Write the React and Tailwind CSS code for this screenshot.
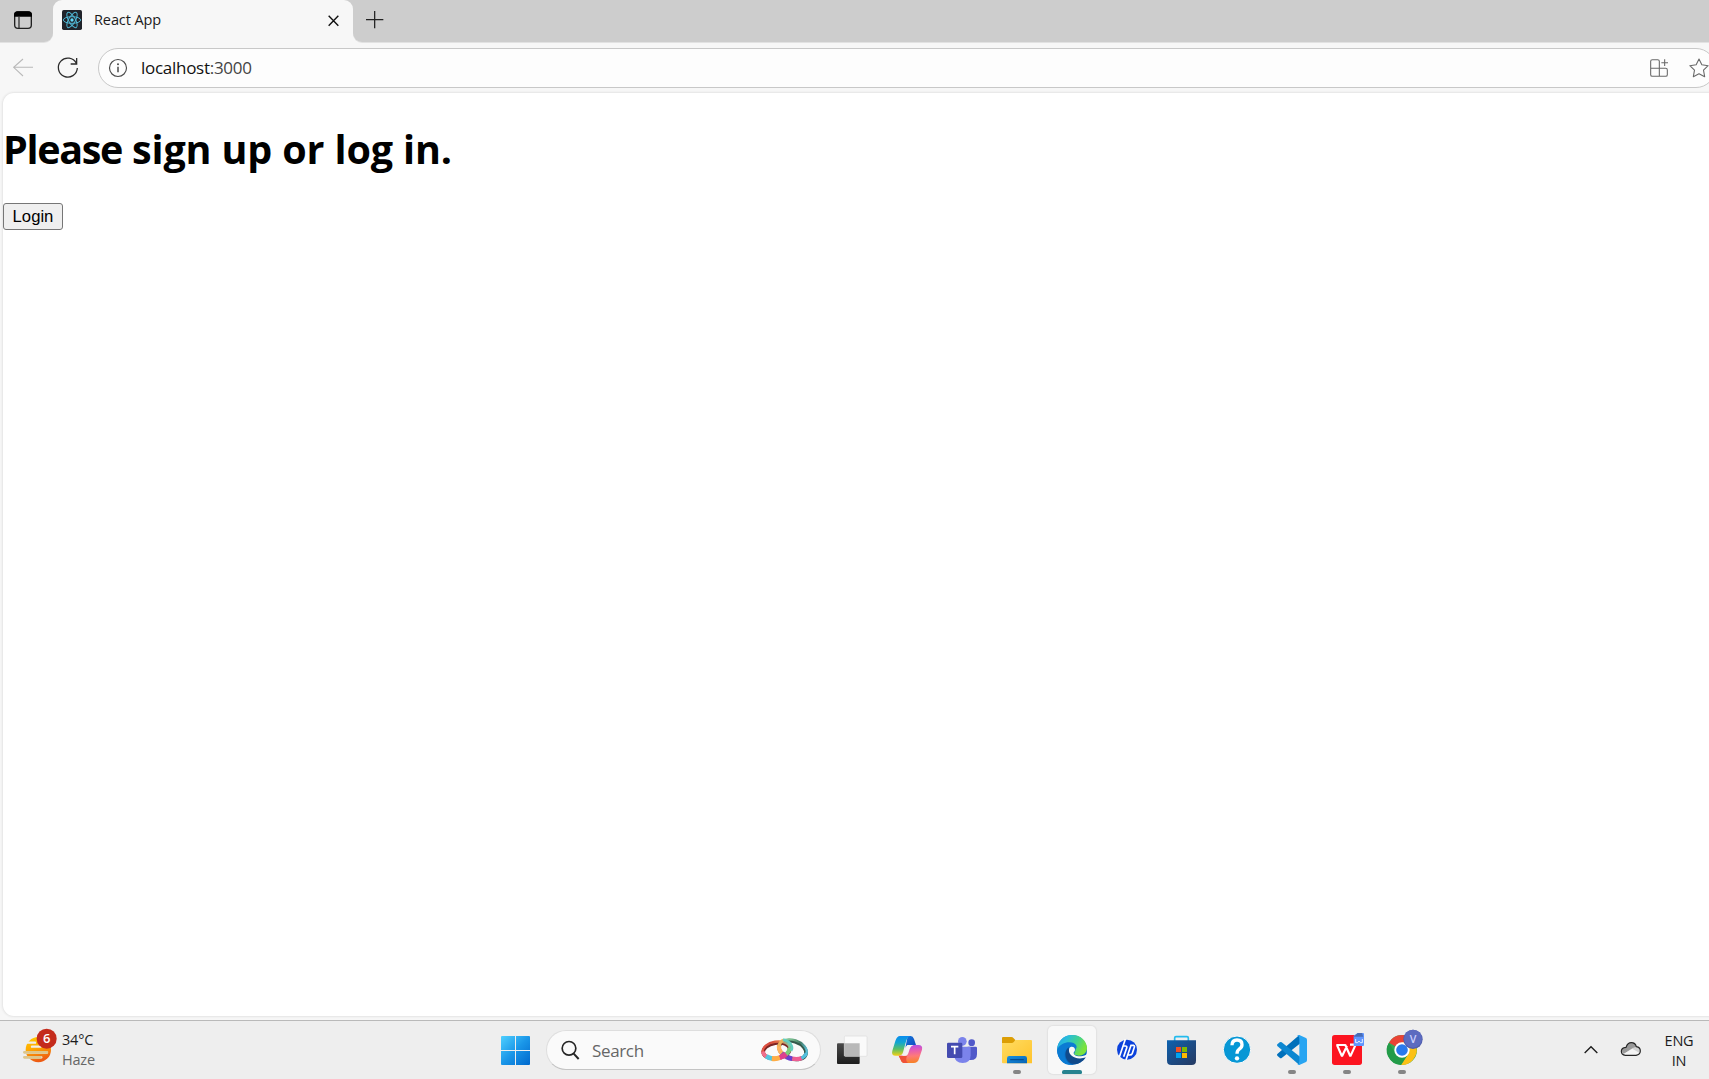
import React from "react";

const UI = "font-['Open_Sans','Noto_Sans',sans-serif]";

function TabBar() {
  return (
    <div className="flex h-[42px] shrink-0 bg-[#f7f7f7]">
      <div className="flex w-[53px] rounded-br-[9px] bg-[#cdcdcd] shadow-[0_1px_0_#e2e2e2]">
        <svg className="ml-3 mt-2 size-6" viewBox="36 24 72 72" fill="none">
          <rect x="44" y="36" width="50" height="49" rx="10" stroke="#202020" strokeWidth="4" />
          <path d="M42 50v-5q0-11 11-11h32q11 0 11 11v5z" fill="#000" />
          <path d="M57 50v34" stroke="#202020" strokeWidth="3.5" />
        </svg>
      </div>
      <div className="h-5 w-[300px] bg-[#cdcdcd]">
        <div className="flex h-[42px] items-start rounded-t-[9px] bg-[#f7f7f7] pl-[9px]">
          <svg className="mt-[10px] size-5" viewBox="0 0 60 60" fill="none">
            <rect width="60" height="60" rx="5" fill="#20232a" />
            <g stroke="#4fb5d2" strokeWidth="3">
              <ellipse cx="30" cy="30" rx="26" ry="10" />
              <ellipse cx="30" cy="30" rx="26" ry="10" transform="rotate(60 30 30)" />
              <ellipse cx="30" cy="30" rx="26" ry="10" transform="rotate(120 30 30)" />
            </g>
            <circle cx="30" cy="30" r="5" fill="#61dafb" />
          </svg>
          <span className="ml-3 mt-[9px] w-[80px] whitespace-nowrap text-[14.5px] leading-[22px] tracking-[-0.1px] text-[#1b1b1b]">React App</span>
          <svg className="ml-[150px] mt-[12px] size-[18px]" viewBox="0 0 54 54" fill="none">
            <path d="M14 11l29 30M43 11L14 41" stroke="#111" strokeWidth="4.2" />
          </svg>
        </div>
      </div>
      <div className="flex-1 rounded-bl-[9px] bg-[#cdcdcd] pl-[9px] pt-[8px] shadow-[0_1px_0_#e2e2e2]">
        <svg className="size-6" viewBox="0 0 72 72" fill="none">
          <path d="M38 9v52M12 35h52" stroke="#222" strokeWidth="3.8" />
        </svg>
      </div>
    </div>
  );
}

function AddressRow() {
  return (
    <div className="flex h-[50px] shrink-0">
      <svg className="h-[50px] w-[98px] shrink-0" viewBox="0 126 294 150" fill="none">
        <path d="M99 202H42M69 177L41 202l28 26" stroke="#b9b9b9" strokeWidth="3.2" />
        <path d="M229 190A28.5 28.5 0 1 0 232 204M230 174v18h-18" stroke="#2b2b2b" strokeWidth="3.8" />
      </svg>
      <div className="mt-[6px] flex h-10 w-[1618px] shrink-0 items-center rounded-full border border-[#c8c8c8] bg-[#fdfdfd]">
        <svg className="ml-[9px] size-5 shrink-0" viewBox="0 0 60 60" fill="none">
          <circle cx="30" cy="30" r="25.5" stroke="#4a4a4a" strokeWidth="3.4" />
          <path d="M30 26v17" stroke="#4a4a4a" strokeWidth="4.5" />
          <circle cx="30" cy="18.5" r="3" fill="#4a4a4a" />
        </svg>
        <span className="ml-[13px] w-[130px] shrink-0 text-[17px] tracking-[-0.28px] text-[#444]">
          <span className="text-[#111]">localhost</span>
          <span>:3000</span>
        </span>
        <svg className="ml-[1379px] h-[38px] w-[60px] shrink-0" viewBox="123 147 180 114" fill="none" stroke="#686868" strokeWidth="3.2">
          <path d="M151 205V184q0-5-5-5H130q-5 0-5 5v40q0 5 5 5h40q5 0 5-5v-14q0-5-5-5H125M151 205v24M167 178v20M157 188h20" />
          <path strokeLinejoin="round" d="M270 177l8.5 17 19 3-14 13.500 3.500 19.500-17-9-17 9 3.500-19.500-14-13.500 19-3z" />
        </svg>
      </div>
    </div>
  );
}

function TaskIcon({ vb, running, children }) {
  return (
    <svg className="size-12 shrink-0" viewBox={vb}>
      {children}
      {running && <rect x={running} y="180" width="24" height="12" rx="6" fill="#858585" />}
    </svg>
  );
}

function Gradient({ id, stops, x2 = 1, y2 = 1 }) {
  return (
    <linearGradient id={id} x1="0" y1="0" x2={x2} y2={y2}>
      {stops.map((c, i) => (
        <stop key={i} offset={i / (stops.length - 1)} stopColor={c} />
      ))}
    </linearGradient>
  );
}

function Gradients() {
  return (
    <svg className="absolute size-0">
      <defs>
        <Gradient id="win" stops={["#4fd0ff", "#1a96e8", "#0068cc"]} />
        <Gradient id="sun" stops={["#ffce00", "#ffa800", "#ed5b13"]} x2={0.3} />
        <Gradient id="dark" stops={["#4a4a4a", "#1d1d1d"]} x2={0} />
        <Gradient id="copA" stops={["#0a8cf0", "#12a6cf", "#5bbf63", "#f3cf16"]} x2={0} />
        <Gradient id="copB" stops={["#a950f0", "#e35bb5", "#ff7a78", "#f7812c"]} x2={0.1} />
        <Gradient id="copC" stops={["#1278dc", "#1248bd"]} />
        <Gradient id="folder" stops={["#ffdc62", "#ffc32b"]} />
        <Gradient id="fblue" stops={["#1890e0", "#0763b4"]} />
        <Gradient id="edgeA" stops={["#249fe1", "#29bddb", "#41d290", "#7be33b"]} x2={1} y2={0.4} />
        <Gradient id="edgeB" stops={["#22a9e8", "#0b7ad2", "#0761b7"]} x2={0.3} />
        <Gradient id="store" stops={["#0c62b0", "#1c4c86", "#263a62"]} />
        <Gradient id="ringA" stops={["#e55543", "#d4493c", "#e77748", "#85c9a1"]} y2={0} />
        <Gradient id="ringB" stops={["#8fd39d", "#7cc092", "#447965", "#5bc3dc"]} y2={0} />
      </defs>
    </svg>
  );
}

function Rings() {
  return (
    <svg className="ml-[108px] h-[30px] w-[50px] shrink-0" viewBox="840 78 150 90" fill="none">
      <g transform="rotate(18 938 122)">
        <ellipse cx="938" cy="123" rx="42" ry="26" stroke="#33594b" strokeWidth="11" />
        <ellipse cx="938" cy="121" rx="43" ry="28" stroke="url(#ringB)" strokeWidth="7" />
        <path d="M895 121q2 15 15 21" stroke="#ffb35e" strokeWidth="13" />
        <path d="M910 142q10 6 20 7" stroke="#a6509c" strokeWidth="14" />
        <path d="M928 148q9 2 18 0" stroke="#693fd0" strokeWidth="14" />
        <path d="M945 148q17-2 27-11" stroke="#ee5e92" strokeWidth="13" />
        <path d="M971 138q9-9 9-19" stroke="#52bfdf" strokeWidth="9" />
      </g>
      <g transform="rotate(-9 889 124)">
        <ellipse cx="889" cy="125" rx="40" ry="23" stroke="#7c2523" strokeWidth="11" />
        <ellipse cx="889" cy="123" rx="41" ry="25" stroke="url(#ringA)" strokeWidth="7" />
        <path d="M848 121q1 12 12 19" stroke="#ee6f8c" strokeWidth="11" />
        <path d="M856 137q8 7 18 10" stroke="#53c6df" strokeWidth="14" />
        <path d="M872 146q13 4 25 1" stroke="#ffad45" strokeWidth="15" />
        <path d="M896 147q13-2 22-8" stroke="#df3f8e" strokeWidth="15" />
        <path d="M917 140q11-7 13-18" stroke="#7bcd79" strokeWidth="12" />
      </g>
      <path d="M896 112q3-13 14-19" stroke="#e8b45c" strokeWidth="9" />
      <path d="M909 92q18 4 24 15 6 10 0 18" stroke="#63cfc0" strokeWidth="8" />
    </svg>
  );
}

function SearchBox() {
  return (
    <div className="ml-4 flex h-10 w-[275px] shrink-0 items-center rounded-full border border-[#dedede] border-b-[#c4c4c4] bg-[#fafafa]">
      <svg className="ml-[13px] mt-px size-[22px] shrink-0" viewBox="240 90 66 66" fill="none">
        <circle cx="267" cy="115" r="20.500" stroke="#252525" strokeWidth="5" />
        <path d="M281 131l15 16" stroke="#252525" strokeWidth="6" />
      </svg>
      <span className="ml-[10px] mt-[2px] w-[60px] shrink-0 text-[17px] leading-6 tracking-[-0.35px] text-[#666]">Search</span>
      <Rings />
    </div>
  );
}

function Taskbar() {
  return (
    <div className="flex h-[59px] shrink-0 border-t border-[#b9b9b9] bg-[#eeeeee]">
      <div className="flex w-[501px] shrink-0">
        <svg className="ml-[20px] mt-[6px] h-9 w-[40px]" viewBox="60 78 120 108">
          <circle cx="115" cy="146" r="38" fill="url(#sun)" />
          <path d="M84 125h21M96 137h25M74 155h66M74 169h50" stroke="#eeeeee" strokeWidth="7" strokeLinecap="round" />
          <path d="M73 154h68M73 169h48" stroke="#ddc58b" strokeWidth="8" strokeLinecap="round" />
          <circle cx="140" cy="113" r="30" fill="#c42b1c" />
          <text x="140" y="127" textAnchor="middle" fontSize="39" fontFamily="Open Sans" fontWeight="600" fill="#fff">6</text>
        </svg>
        <div className="ml-[2px] mt-[9px] text-[14.5px] leading-5 tracking-[-0.2px]">
          <div className="text-[#1c1c1c]">34°C</div>
          <div className="text-[#666]">Haze</div>
        </div>
      </div>
      <svg className="mt-[15px] size-[29px] shrink-0" viewBox="0 0 87 87">
        <path fill="url(#win)" d="M3 0h39v42H0V3q0-3 3-3zM45 0h39q3 0 3 3v39H45zM0 45h42v42H3q-3 0-3-3zM45 45h42v39q0 3-3 3H45z" />
      </svg>
      <div className="mt-[9px] flex">
        <SearchBox />
      </div>
      <div className="ml-[7px] mt-[5px] flex gap-[7px]">
        <TaskIcon vb="9 48 144 144">
          <rect x="36" y="100" width="68" height="62" rx="3" fill="url(#dark)" />
          <rect x="58" y="78" width="68" height="61" rx="3" fill="#fafafa" stroke="#dcdcdc" strokeWidth="2" />
          <path d="M58 100h46v38H61q-3 0-3-3z" fill="#b8b8b8" />
        </TaskIcon>
        <TaskIcon vb="174 48 144 144">
          <path d="M248 78h9q7 0 10 9l6 18h-20q-10 0-12 9z" fill="url(#copC)" />
          <path d="M225 78h31q-9 3-12 13l-10 36q-3 10-12 10h-10q-14 0-10-15l9-29q5-15 14-15z" fill="url(#copA)" />
          <path d="M221 137h24l8-22q3-10 13-10h14q14 0 11 14l-9 27q-4 13-16 13h-27q-9 0-12-10z" fill="url(#copB)" />
          <path d="M221 137h25q-6 15 3 22h-9q-10 0-13-10z" fill="#ef5138" />
          <path d="M247 105h18q-8 3-11 12l-4 13q-2 7-9 7h-10q5-3 7-9z" fill="#f5f2f2" />
        </TaskIcon>
        <TaskIcon vb="339 48 144 144">
          <circle cx="412" cy="94" r="13" fill="#7b83eb" />
          <circle cx="440" cy="98" r="10" fill="#5059c9" />
          <path d="M428 110h24q4 0 4 4v18q0 18-18 18h-10z" fill="#5059c9" />
          <path d="M388 110h45q4 0 4 4v22q0 23-24 23t-25-23z" fill="#7b83eb" />
          <rect x="366" y="98" width="46" height="46" rx="4" fill="#444bb0" />
          <path d="M378 110h22M389 109v24" stroke="#fff" strokeWidth="5" />
        </TaskIcon>
        <TaskIcon vb="504 48 144 144" running={564}>
          <path d="M531 84q0-3 3-3h25q4 0 7 4l5 5v12h-40z" fill="#dc9e05" />
          <path d="M531 99h29q4 0 7-4l4-5h47q3 0 3 3v67h-87q-3 0-3-3z" fill="url(#folder)" />
          <path d="M546 160v-15q0-7 7-7h46q7 0 7 7v15z" fill="url(#fblue)" />
          <path d="M557 149h38" stroke="#064c91" strokeWidth="3.500" strokeLinecap="round" />
        </TaskIcon>
        <svg className="size-12 shrink-0 rounded-[5px] bg-[#f8f8f8] shadow-[0_0_1px_1px_#e2e2e2]" viewBox="24 48 144 144">
          <circle cx="96" cy="120" r="45" fill="url(#edgeB)" />
          <path d="M52 113C56 91 73 75 96 75c27 0 45 19 45 39 0 15-12 23-25 23-9 0-15-3-13-8 8-11 1-22-14-22-17 0-24 7-29 17-6-1-9-5-8-11z" fill="url(#edgeA)" />
          <path d="M52 117c8-13 21-20 36-20 20 0 28 14 17 23-7-16-27-10-31 5-4 20 10 37 26 40-30 3-49-18-48-48z" fill="#0b7bd3" />
          <path d="M86 112c-19 14-9 53 21 50 13-2 25-10 31-21-21 8-51 2-52-29z" fill="#114a8b" />
          <path d="M88 114c6-8 17-3 17 5 0 4-3 6-4 9-1 9 16 15 38 6l5-4v9l-5 3c-32 11-58-7-51-28z" fill="#f8f8f8" />
          <rect x="66" y="180" width="60" height="13" rx="6" fill="#26838f" />
        </svg>
        <TaskIcon vb="189 48 144 144">
          <circle cx="261" cy="119" r="30" fill="#0b42dc" />
          <path d="M256 88l-18 53M250 108h6q6 0 4 6l-9 26M282 106h-9l-15 44M278 106q7 0 5 6l-6 18q-2 5-8 5h-5" fill="none" stroke="#fff" strokeWidth="5" />
        </TaskIcon>
        <TaskIcon vb="354 48 144 144">
          <path d="M404 97V84q0-4 4-4h33q4 0 4 4v13" fill="none" stroke="#24bbed" strokeWidth="5" />
          <path d="M381 91h87v61q0 13-13 13h-61q-13 0-13-13z" fill="url(#store)" />
          <rect x="408" y="111" width="15" height="15" fill="#f25022" />
          <rect x="426" y="111" width="15" height="15" fill="#7fba00" />
          <rect x="408" y="129" width="15" height="15" fill="#00a4ef" />
          <rect x="426" y="129" width="15" height="15" fill="#ffb900" />
        </TaskIcon>
        <TaskIcon vb="-51 48 144 144">
          <circle cx="21" cy="119" r="41" fill="#0797d5" stroke="#fafafa" strokeWidth="3" />
          <path d="M6 106q0-16 15-16 15 0 15 14 0 8-8 13-7 5-7 14" fill="none" stroke="#fff" strokeWidth="10" />
          <circle cx="21" cy="145" r="6.500" fill="#fff" />
        </TaskIcon>
        <TaskIcon vb="114 48 144 144" running={174}>
          <path d="M208 75l4 24-57 45q-3 2-6-1l-7-6q-2-3 0-5z" fill="#0070bb" />
          <path d="M142 108q-2-3 0-5l7-6q3-2 6 0l57 45-4 23z" fill="#0d87d1" />
          <path d="M208 75l20 9q3 2 3 6v60q0 4-3 6l-20 9q-4 0-7-3 7 3 7-5V84q0-7-7-6 4-4 7-3z" fill="#28a5f2" />
        </TaskIcon>
        <TaskIcon vb="279 48 144 144" running={339}>
          <rect x="306" y="75" width="90" height="90" rx="8" fill="#fc1420" />
          <path d="M321 105l15 34 15-31M319 105h27l15 34 16-35h-17" fill="none" stroke="#fff" strokeWidth="6.500" strokeLinejoin="bevel" />
          <path d="M371 77l12-8h16q3 0 3 3v33q0 3-3 3h-25q-3 0-3-3z" fill="#6096ff" />
          <path d="M371 80l12-11h13l4 11z" fill="#486cb5" />
          <path d="M377 87v11h6l4-5 4 5h6V87" fill="none" stroke="#fff" strokeWidth="2.500" />
        </TaskIcon>
        <TaskIcon vb="444 48 144 144" running={504}>
          <circle cx="516" cy="120" r="45" fill="#34a853" />
          <path d="M516 120L477 98Q489 75 516 75q27 0 39 22z" fill="#ea4335" />
          <path d="M516 97h39q14 29-7 54-15 16-35 14l22-34z" fill="#fbc116" />
          <path d="M477 98l20 33 38 0-22 34q-27-1-39-26-10-23 3-41z" fill="#229b48" />
          <circle cx="516" cy="120" r="23" fill="#fff" />
          <circle cx="516" cy="120" r="17.500" fill="#2979ec" />
          <circle cx="549" cy="88" r="29" fill="#4f5dac" />
          <circle cx="549" cy="86" r="27" fill="#5c6bc0" />
          <text x="549" y="98" textAnchor="middle" fontSize="32" fontFamily="Open Sans" fontWeight="600" fill="#cbd0ff">V</text>
        </TaskIcon>
      </div>
      <svg className="ml-[154px] mt-[17px] h-6 w-[66px] shrink-0" viewBox="60 114 198 72" fill="none">
        <path d="M74 159l19-19 19 19" stroke="#1b1b1b" strokeWidth="4" />
        <path d="M196 166q-12-1-12-12t14-12q5-14 16-14 12 0 15 12 12 2 12 13t-13 13z" fill="#d2d2d2" />
        <path d="M186 148q5-7 12-6 6-14 16-14 12 0 15 12-12 3-19 9l-18 13q-8-5-6-14z" fill="#999" />
        <path d="M190 162l27-16 23 14q-3 6-11 6h-32z" fill="#f4f4f4" />
        <path d="M196 166q-12-1-12-12t14-12q5-14 16-14 12 0 15 12 12 2 12 13t-13 13z" stroke="#252525" strokeWidth="3.500" />
      </svg>
      <div className="ml-[13px] mt-[10px] w-[40px] text-center text-[14.5px] leading-5 tracking-[-0.2px] text-[#1c1c1c]">
        <div>ENG</div>
        <div>IN</div>
      </div>
    </div>
  );
}

export default function App() {
  return (
    <div className={`${UI} flex h-[1079px] w-[1709px] flex-col overflow-hidden bg-[#f7f7f7]`}>
      <Gradients />
      <TabBar />
      <AddressRow />
      <main className="mb-[4px] ml-[3px] mt-px flex flex-1 flex-col items-start rounded-l-[11px] bg-white shadow-[0_0_2px_1px_#e4e4e4]">
        <h1 className="mt-[29px] whitespace-nowrap text-[39.500px] font-bold leading-[54px] tracking-[-0.15px] text-black">
          <span className="tracking-[-1.35px]">Please</span> sign up or log in.
        </h1>
        <button className="mt-[27px] h-[27px] w-[60px] rounded-[3px] border border-[#767676] bg-[#efefef] pt-px font-['Liberation_Sans',Arial,sans-serif] text-[16.67px] leading-none text-black">
          Login
        </button>
      </main>
      <Taskbar />
    </div>
  );
}
